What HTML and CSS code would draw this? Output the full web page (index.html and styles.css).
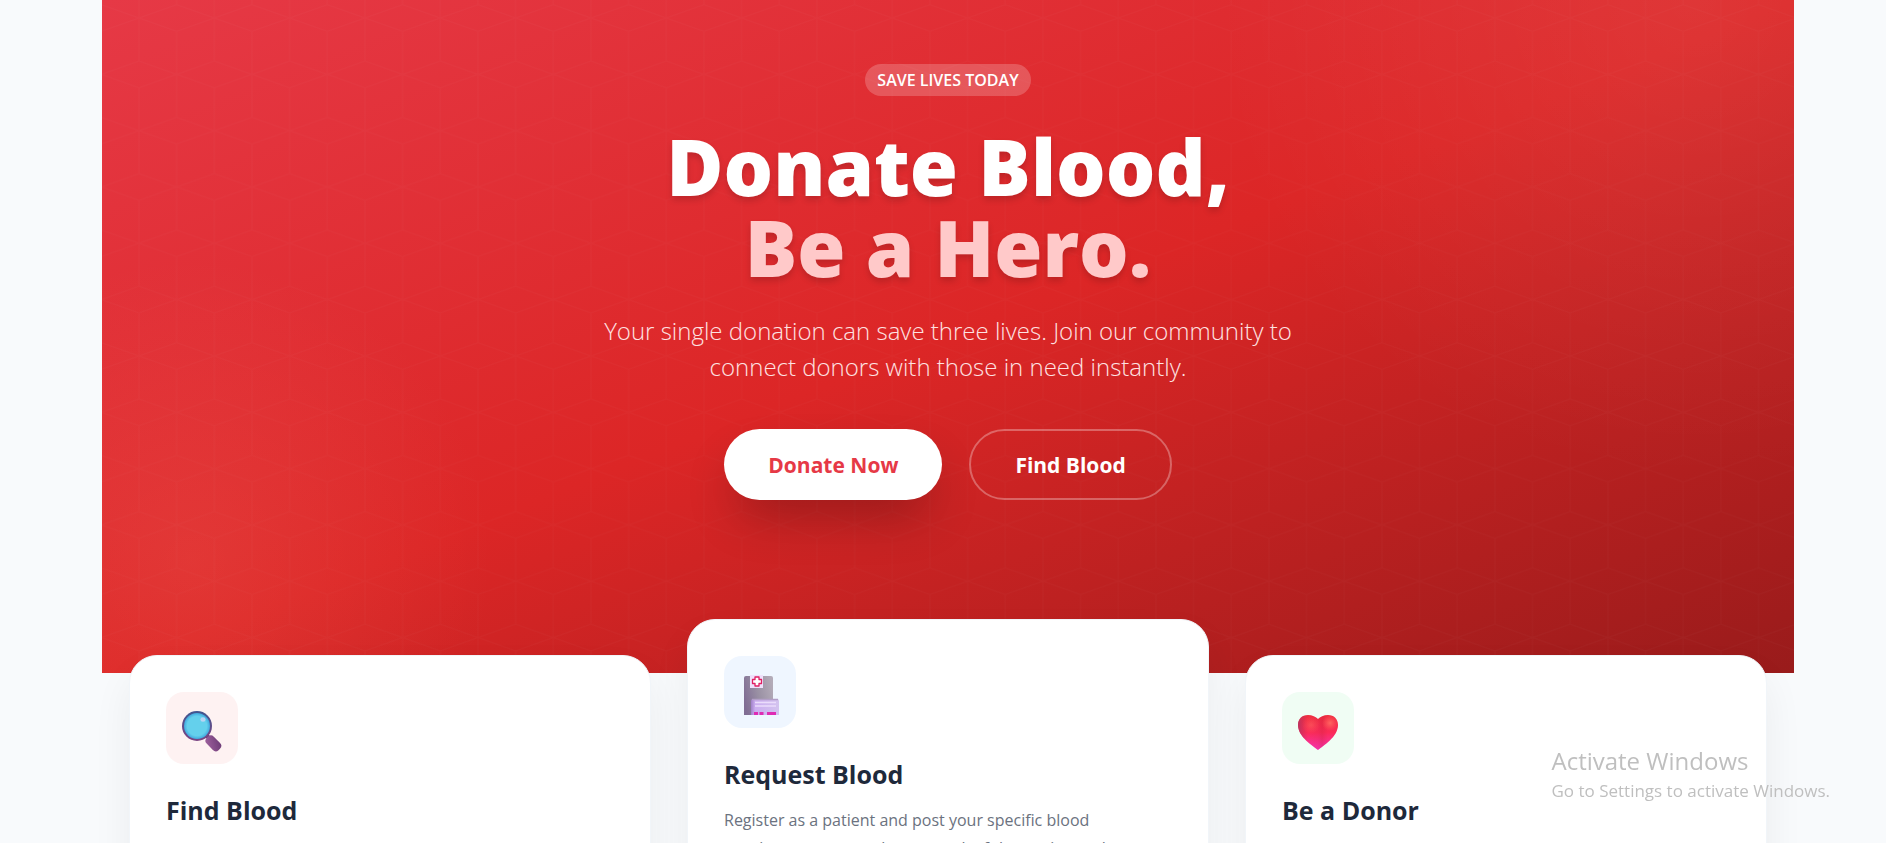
FILE: index.html
```html
<!DOCTYPE html>
<html lang="en">
<head>
    <meta charset="UTF-8">
    <meta name="viewport" content="width=device-width, initial-scale=1.0">
    <title>Donate Blood, Be a Hero</title>
    <link rel="stylesheet" href="styles.css">
</head>
<body>
    <main class="page">
        <section class="hero">
            <svg class="hero-pattern" aria-hidden="true">
                <defs>
                    <pattern id="cubes" width="226" height="338" patternUnits="userSpaceOnUse" patternTransform="translate(37 18) scale(.3333)">
                        <path d="M0 0L113 40L226 0M0 338L113 298L226 338M0 129L113 169L0 209M226 129L113 169L226 209M0 0V129M226 0V129M0 209V338M226 209V338M113 40V298" fill="none" stroke="#fff" stroke-width="4"/>
                    </pattern>
                </defs>
                <rect width="100%" height="100%" fill="url(#cubes)"/>
            </svg>
            <div class="hero-content">
                <span class="badge">SAVE LIVES TODAY</span>
                <h1>Donate Blood,<br><span class="accent">Be a Hero.</span></h1>
                <p class="lead">Your single donation can save three lives. Join our community to connect donors with those in need instantly.</p>
                <div class="actions">
                    <a href="#donate" class="btn btn-primary">Donate Now</a>
                    <a href="#find" class="btn btn-outline">Find Blood</a>
                </div>
            </div>
        </section>

        <section class="cards">
            <article class="card" id="find">
                <div class="icon icon-red">
                    <svg viewBox="0 0 72 72" aria-hidden="true">
                        <defs>
                            <linearGradient id="rim" x1="0" y1="0" x2="0" y2="1">
                                <stop offset="0" stop-color="#40568f"/>
                                <stop offset="1" stop-color="#7c4483"/>
                            </linearGradient>
                            <radialGradient id="lens">
                                <stop offset=".75" stop-color="#64d0ec"/>
                                <stop offset="1" stop-color="#41a9de"/>
                            </radialGradient>
                            <linearGradient id="handle" x1="1" y1="0" x2="0" y2="1">
                                <stop offset="0" stop-color="#6b3a75"/>
                                <stop offset="1" stop-color="#a0629f"/>
                            </linearGradient>
                        </defs>
                        <path d="M40 43l4 4" stroke="#6b3a75" stroke-width="4"/>
                        <rect x="39" y="46" width="17" height="10" rx="4" transform="rotate(46 47 51)" fill="url(#handle)"/>
                        <circle cx="31" cy="34" r="15" fill="url(#rim)"/>
                        <circle cx="31" cy="34" r="13" fill="url(#lens)"/>
                        <ellipse cx="37" cy="27.500" rx="2.600" ry="2.200" fill="#b9d4f3"/>
                    </svg>
                </div>
                <h2>Find Blood</h2>
            </article>

            <article class="card card-raised">
                <div class="icon icon-blue">
                    <svg viewBox="0 0 72 72" aria-hidden="true">
                        <defs>
                            <linearGradient id="tower" x1="0" y1=".6" x2="1" y2=".3">
                                <stop offset="0" stop-color="#806d94"/>
                                <stop offset=".5" stop-color="#9a91a4"/>
                                <stop offset="1" stop-color="#b3abb8"/>
                            </linearGradient>
                            <linearGradient id="annex" x1="0" y1="0" x2="1" y2="0">
                                <stop offset="0" stop-color="#a181ca"/>
                                <stop offset=".15" stop-color="#cbaef0"/>
                                <stop offset="1" stop-color="#d3c3ef"/>
                            </linearGradient>
                        </defs>
                        <path d="M20 22q0-2 2-2h25q2 0 2 2v37H20z" fill="url(#tower)"/>
                        <path d="M26 19h13v13H26z" fill="#efe0fb"/>
                        <path d="M31 21h4v2.500h2.500v4H35V30h-4v-2.500h-2.500v-4H31z" fill="#fff" stroke="#e01f63" stroke-width="1.300" stroke-linejoin="round"/>
                        <path d="M27 45q0-2 2-2h24q2 0 2 2v14H27z" fill="url(#annex)"/>
                        <path d="M28 43.500h26" stroke="#b29fc7" stroke-width="1.500"/>
                        <path d="M31 46.500h21M31 50h21" stroke="#eadcfb" stroke-width="1.500"/>
                        <path d="M30 56h4v3h-4zM35.500 56h4v3h-4zM43 56h9v3h-9z" fill="#df2bb4"/>
                    </svg>
                </div>
                <h2>Request Blood</h2>
                <p>Register as a patient and post your specific blood<br>requirements to reach a network of donors in need</p>
            </article>

            <article class="card" id="donate">
                <div class="icon icon-green">
                    <svg viewBox="0 0 72 72" aria-hidden="true">
                        <defs>
                            <linearGradient id="heart" x1=".5" y1="0" x2=".5" y2="1">
                                <stop offset="0" stop-color="#f02f3f"/>
                                <stop offset=".5" stop-color="#fb2b58"/>
                                <stop offset="1" stop-color="#f833b4"/>
                            </linearGradient>
                            <linearGradient id="heart-edge" x1="0" y1=".5" x2="1" y2=".5">
                                <stop offset="0" stop-color="#a03568" stop-opacity=".7"/>
                                <stop offset=".25" stop-color="#c22d55" stop-opacity="0"/>
                                <stop offset=".5" stop-color="#c01f4c" stop-opacity=".1"/>
                                <stop offset=".6" stop-color="#c01f3c" stop-opacity=".25"/>
                                <stop offset=".75" stop-color="#c01f3c" stop-opacity="0"/>
                            </linearGradient>
                            <radialGradient id="heart-glow">
                                <stop offset="0" stop-color="#ff6b62"/>
                                <stop offset="1" stop-color="#ff5b5b" stop-opacity="0"/>
                            </radialGradient>
                        </defs>
                        <path d="M36 58C31 54 16 45 16 33C16 27 20 23 26 23C30 23 34 25 36 27C38 25 42 23 46 23C52 23 56 27 56 33C56 45 41 54 36 58Z" fill="url(#heart)"/>
                        <path d="M36 58C31 54 16 45 16 33C16 27 20 23 26 23C30 23 34 25 36 27C38 25 42 23 46 23C52 23 56 27 56 33C56 45 41 54 36 58Z" fill="url(#heart-edge)"/>
                        <circle cx="29" cy="33" r="9" fill="url(#heart-glow)" opacity=".5"/>
                        <circle cx="48" cy="31" r="8" fill="url(#heart-glow)" opacity=".9"/>
                    </svg>
                </div>
                <h2>Be a Donor</h2>
            </article>
        </section>
    </main>

    <aside class="watermark">
        <p class="watermark-title">Activate Windows</p>
        <p class="watermark-text">Go to Settings to activate Windows.</p>
    </aside>
</body>
</html>
```
FILE: styles.css
```css
* {
    box-sizing: border-box;
}

body {
    margin: 0;
    background-color: #f8fafc;
    font-family: "Open Sans", "Noto Sans", sans-serif;
    color: #1e293b;
}

h1, h2, p {
    margin: 0;
}

.page {
    margin: 0 92px 0 102px;
}

.hero {
    position: relative;
    padding: 64px 24px 173px;
    background:
        radial-gradient(circle 300px at 90px 560px, rgba(255, 140, 120, 0.15), rgba(255, 140, 120, 0)),
        radial-gradient(circle 480px at 94% 0, rgba(255, 255, 255, 0.07), rgba(255, 255, 255, 0)),
        linear-gradient(to bottom right, #e63946, #dc2626 50%, #991b1b);
    text-align: center;
    color: #fff;
}

/* faint cube grid over the whole hero */
.hero-pattern {
    position: absolute;
    inset: 0;
    width: 100%;
    height: 100%;
    opacity: 0.02;
}

.hero-content {
    position: relative;
    display: flex;
    flex-direction: column;
    align-items: center;
}

.badge {
    padding: 0 12px;
    border-radius: 16px;
    background-color: rgba(255, 255, 255, 0.2);
    font-size: 16px;
    font-weight: 600;
    line-height: 32px;
}

h1 {
    margin-top: 30px;
    font-size: 78px;
    font-weight: 800;
    line-height: 81px;
    text-shadow: 0 4px 6px rgba(0, 0, 0, 0.15);
}

.accent {
    color: #ffc9c9;
}

.lead {
    max-width: 740px;
    margin-top: 25px;
    color: #fee2e2;
    font-size: 24px;
    font-weight: 300;
    line-height: 36px;
}

.actions {
    display: flex;
    gap: 27px;
    margin-top: 44px;
}

.btn {
    display: flex;
    align-items: center;
    height: 71px;
    padding: 0 44px;
    border-radius: 36px;
    font-size: 21px;
    font-weight: 700;
    text-decoration: none;
}

.btn-primary {
    background-color: #fff;
    color: #e63946;
    box-shadow: 0 25px 50px -12px rgba(0, 0, 0, 0.3);
}

.btn-outline {
    border: 2px solid rgba(255, 255, 255, 0.3);
    color: #fff;
}

.cards {
    position: relative;
    display: grid;
    grid-template-columns: repeat(3, 1fr);
    gap: 36px;
    margin: -18px 27px 0;
}

.card {
    padding: 36px;
    border: 1px solid #f1f5f9;
    border-radius: 28px;
    background-color: #fff;
    box-shadow: 0 20px 40px rgba(0, 0, 0, 0.06);
}

.card-raised {
    margin-top: -36px;
    margin-bottom: 36px;
}

.icon {
    width: 72px;
    height: 72px;
    border-radius: 18px;
}

.icon svg {
    display: block;
}

.icon-red {
    background-color: #fef2f2;
}

.icon-blue {
    background-color: #eff6ff;
}

.icon-green {
    background-color: #f0fdf4;
}

h2 {
    margin-top: 28px;
    font-size: 25px;
    font-weight: 700;
    line-height: 36px;
}

.card p {
    margin-top: 14px;
    color: #6b7280;
    font-size: 16px;
    line-height: 28px;
}

.watermark {
    position: fixed;
    right: 56px;
    bottom: 39px;
    color: #bfbfbf;
}

.watermark-title {
    font-size: 24px;
    line-height: 34px;
}

.watermark-text {
    font-size: 17px;
    line-height: 26px;
}
```
